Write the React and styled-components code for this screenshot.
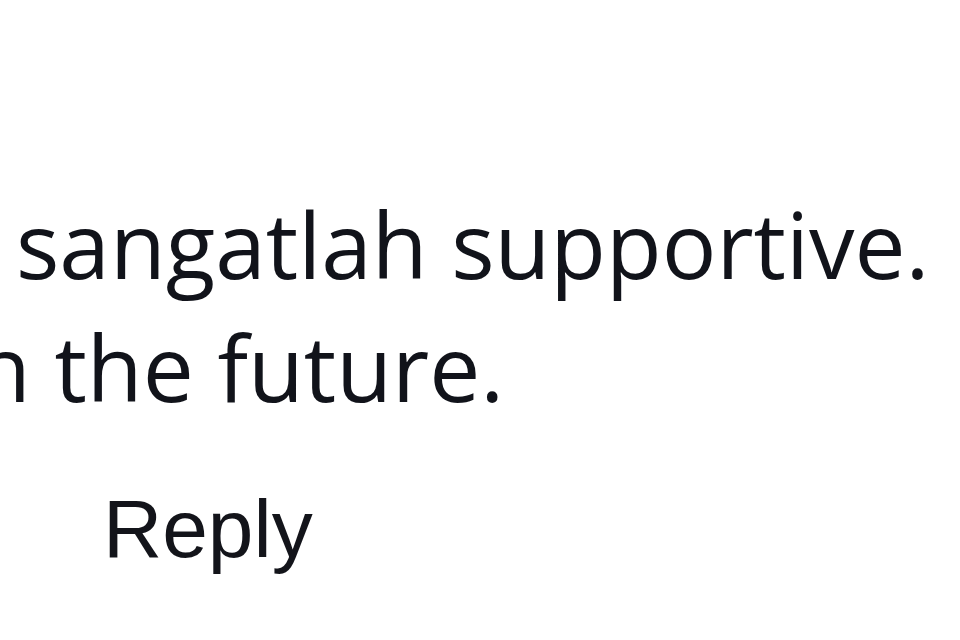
import React from "react";
import styled, { createGlobalStyle } from "styled-components";

const Global = createGlobalStyle`
  html, body { margin: 0; padding: 0; background: #ffffff; }
  body { width: 960px; height: 640px; overflow: hidden; }
`;

const Page = styled.div`
  width: 960px;
  height: 640px;
  overflow: hidden;
  background: #ffffff;
  display: flex;
  flex-direction: column;
  padding-top: 183px;
  box-sizing: border-box;
`;

const Body = styled.div`
  font-family: "Open Sans", "Noto Sans", sans-serif;
  font-size: 91px;
  line-height: 123px;
  color: #11131a;
  white-space: nowrap;
`;

const Line = styled.div`
  margin-left: ${(p) => p.$offset}px;
`;

const Actions = styled.div`
  display: flex;
  margin-top: 53px;
  padding-left: 103px;
`;

const ReplyLink = styled.span`
  font-family: "Liberation Sans", Arial, sans-serif;
  font-size: 82px;
  line-height: 93px;
  color: #13141a;
  cursor: pointer;
`;

export default function App() {
  return (
    <>
      <Global />
      <Page>
        <Body>
          <Line $offset={16}>sangatlah supportive.</Line>
          <Line $offset={-48}>in the future.</Line>
        </Body>
        <Actions>
          <ReplyLink>Reply</ReplyLink>
        </Actions>
      </Page>
    </>
  );
}
